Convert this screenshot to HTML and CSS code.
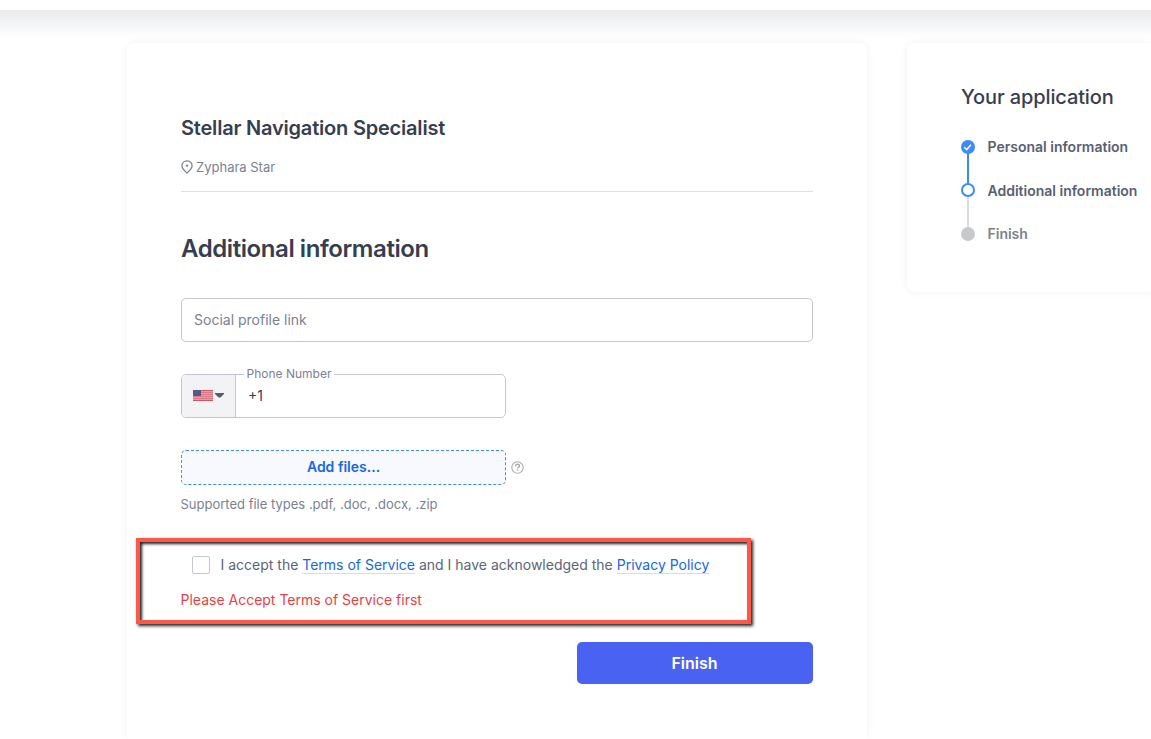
FILE: index.html
```html
<!DOCTYPE html>
<html lang="en">
<head>
<meta charset="utf-8">
<title>Stellar Navigation Specialist</title>
<link rel="stylesheet" href="styles.css">
</head>
<body>
<header class="topbar"></header>
<div class="topbar-shade"></div>
<main class="layout">
  <section class="card form-card">
    <h1 class="job-title">Stellar Navigation Specialist</h1>
    <div class="location">
      <svg class="pin" width="12" height="14" viewBox="0 0 12 14" fill="none" stroke="#7b8194" stroke-width="1.25"><path d="M6 .8C3.1.8.9 2.9.9 5.700c0 2.400 1.900 4.500 5.100 7.400 3.200-2.900 5.100-5 5.100-7.400C11.100 2.900 8.900.8 6 .8z"/><circle cx="6" cy="5.600" r="1.200" fill="#7b8194" stroke="none"/></svg>
      <span class="location-name">Zyphara Star</span>
    </div>
    <h2 class="section-title">Additional information</h2>
    <div class="field social"><span>Social profile link</span></div>
    <div class="field phone">
      <div class="country">
        <svg width="20" height="11" viewBox="0 0 20 11" shape-rendering="crispEdges"><path fill="#e79da6" d="M0 0h20v11H0z"/><path fill="#cf5665" d="M0 0h20v1H0zM0 10h20v1H0z"/><path fill="#d97a87" d="M0 2h20v1H0zM0 4h20v1H0zM0 6h20v1H0zM0 8h20v1H0z"/><path fill="#58568a" d="M0 0h8v6H0z"/></svg>
        <svg class="caret" width="9" height="5" viewBox="0 0 9 5"><path d="M0 0h9v1L5.500 4.600h-2L0 1z" fill="#555e70"/></svg>
      </div>
      <span class="phone-value">+1</span>
      <span class="phone-label">Phone Number</span>
    </div>
    <div class="upload-row">
      <div class="upload"><span>Add files...</span></div>
      <svg width="13" height="13" viewBox="0 0 13 13" fill="none" stroke="#adadad"><circle cx="6.500" cy="6.500" r="5.700" stroke-width="1.100"/><path d="M4.500 5.200c0-1.200.9-1.900 2-1.900s2 .6 2 1.600c0 1.200-1.900 1.300-1.900 2.700" stroke-width="1.400"/><path d="M5.900 8.400h1.400v1.400H5.900z" fill="#adadad" stroke="none"/></svg>
    </div>
    <p class="hint"><span>Supported file types .pdf, .doc, .docx, .zip</span></p>
    <div class="notice">
      <div class="accept">
        <span class="checkbox"></span>
        <span class="terms">I accept the <a>Terms of Service</a> and I have acknowledged the <a>Privacy Policy</a></span>
      </div>
      <p class="error">Please Accept Terms of Service first</p>
    </div>
    <button class="submit">Finish</button>
  </section>
  <aside class="card steps-card">
    <h3 class="steps-title">Your application</h3>
    <div class="steps">
      <svg width="14" height="102" viewBox="0 0 14 102" fill="none"><path d="M7 10v37" stroke="#3d8bfa" stroke-width="2"/><path d="M7 57v32" stroke="#dcdcde" stroke-width="2"/><circle cx="7" cy="7" r="7" fill="#3d8bfa"/><path d="M3.200 7.200l2.500 2.400 4.300-4.900" stroke="#fff" stroke-width="1.500"/><circle cx="7" cy="50" r="6" fill="#fff" stroke="#3d8bfa" stroke-width="2"/><circle cx="7" cy="94" r="7" fill="#c8c9cd"/></svg>
      <div class="step-names">
        <span>Personal information</span>
        <span>Additional information</span>
        <span class="pending">Finish</span>
      </div>
    </div>
  </aside>
</main>
</body>
</html>
```
FILE: styles.css
```css
* { box-sizing: border-box; }
body {
  margin: 0;
  height: 739px;
  overflow: hidden;
  background: #fff;
  color: #373e4f;
  font-family: Inter, "Liberation Sans", sans-serif;
}
h1, h2, h3, p { margin: 0; }
.topbar { height: 10px; }
.topbar-shade { height: 33px; background: linear-gradient(#e9eaec 0, #f2f3f4 12px, #f9fbfa 20px, #fff 29px); }
.layout { display: flex; gap: 40px; height: 696px; padding-left: 127px; }
.card { background: #fff; border-radius: 8px; box-shadow: 0 0 10px rgba(0, 0, 0, .055); }
.form-card { flex: 0 0 740px; border-radius: 8px 8px 0 0; padding: 70px 54px 0; display: flex; flex-direction: column; }
.job-title { font-size: 20px; line-height: 30px; font-weight: 600; letter-spacing: -.2px; white-space: nowrap; }
.location { height: 49px; padding-bottom: 1px; display: flex; align-items: center; gap: 3px; border-bottom: 1px solid #dedfe2; color: #7b8194; font-size: 13px; line-height: 20px; }
.section-title { margin-top: 39px; font-size: 24px; line-height: 36px; font-weight: 600; letter-spacing: -.42px; }
.field { border: 1px solid #c3c7d4; border-radius: 5px; height: 44px; display: flex; align-items: center; }
.social { margin-top: 31px; padding: 0 0 2px 12px; font-size: 14px; color: #7b8194; }
.phone { position: relative; width: 325px; margin-top: 32px; }
.country { display: flex; align-items: center; justify-content: center; gap: 2px; width: 54px; height: 42px; padding-bottom: 1px; background: #f3f3f6; border-right: 1px solid #c3c7d4; border-radius: 4px 0 0 4px; }
.phone-value { margin-left: 12px; padding-bottom: 2px; font-size: 14px; }
.phone-label { position: absolute; left: 61.500px; top: -10px; padding: 0 3px; background: #fff; font-size: 12px; line-height: 18px; color: #7b8194; white-space: nowrap; }
.upload-row { display: flex; align-items: center; gap: 5px; margin-top: 32px; }
.upload { width: 325px; height: 35px; padding-bottom: 2px; border: 1px dashed #3d8bfa; border-radius: 5px; background: #f8f9fe; color: #1668e3; font-size: 14px; font-weight: 600; display: flex; align-items: center; justify-content: center; }
.hint { margin: 9px 0 0 -.5px; font-size: 13px; line-height: 20px; color: #7b8194; }
.notice { width: 615px; height: 86px; margin: 24px 0 0 -45px; padding: 14px 0 0 40.500px; border: 4px solid #ff5849; box-shadow: 2px 2px 3px #222, inset 2px 2px 3px #222; }
.accept { display: flex; align-items: center; gap: 10.500px; height: 18px; margin-left: 11.500px; }
.checkbox { width: 18px; height: 18px; border: 1px solid #c3c7d4; border-radius: 2px; }
.terms { font-size: 14px; line-height: 18px; color: #5c6478; white-space: nowrap; }
.terms a { color: #1668e3; border-bottom: 1px solid #c9dffb; }
.error { margin-top: 16px; color: #ea3f45; font-size: 14px; line-height: 20px; }
.submit { align-self: flex-end; width: 236px; height: 42px; margin-top: 18px; padding: 0 1px 0 0; border: 0; border-radius: 5px; background: #4962f2; color: #fff; font: 600 16px/42px Inter, "Liberation Sans", sans-serif; }
.steps-card { flex: 1; height: 249px; padding: 39px 0 0 54px; border-radius: 8px 0 0 8px; }
.steps-title { font-size: 20px; line-height: 30px; font-weight: 500; letter-spacing: -.12px; }
.steps { display: flex; gap: 12.500px; margin-top: 28px; }
.step-names { display: flex; flex-direction: column; gap: 23.500px; margin-top: -3px; font-size: 14px; line-height: 20px; font-weight: 600; color: #586074; white-space: nowrap; }
.pending { color: #7b8194; }
```
